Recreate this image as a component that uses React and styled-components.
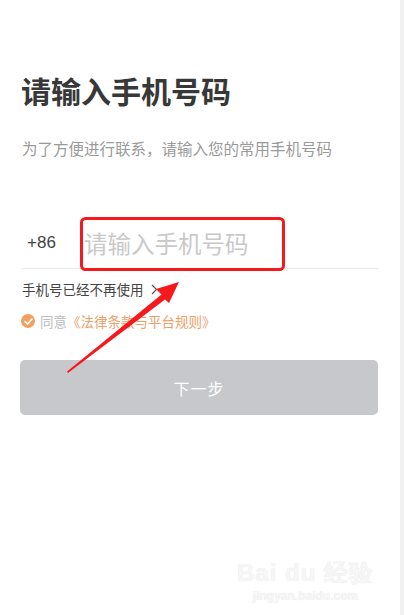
import React from 'react';
import styled, { createGlobalStyle } from 'styled-components';

const GlobalStyle = createGlobalStyle`
  html, body {
    margin: 0;
    padding: 0;
    background: #ffffff;
  }
  body {
    font-family: "Noto Sans CJK SC", "Noto Sans", sans-serif;
  }
`;

const Page = styled.div`
  position: relative;
  width: 404px;
  height: 615px;
  display: flex;
  overflow: hidden;
`;

const Main = styled.main`
  width: 400px;
  box-sizing: border-box;
  padding: 69px 22px 0 20px;
  display: flex;
  flex-direction: column;
  position: relative;
`;

const SideStrip = styled.div`
  width: 4px;
  background: #f1f1f1;
`;

const Title = styled.h1`
  margin: 0 0 0 1px;
  font-size: 30px;
  line-height: 42px;
  font-weight: 700;
  color: #383838;
`;

const Subtitle = styled.p`
  margin: 26px 0 0 2px;
  font-size: 15.5px;
  line-height: 22px;
  color: #9a9a9a;
`;

const PhoneRow = styled.div`
  margin: 59px 0 0 2px;
  height: 50px;
  display: flex;
  align-items: center;
  border-bottom: 1px solid #e9e9e9;
`;

const Prefix = styled.span`
  width: 57px;
  padding-left: 5px;
  font-family: "Liberation Sans", Arial, sans-serif;
  font-size: 17px;
  color: #444444;
`;

const PhoneInput = styled.input`
  flex: 1;
  border: none;
  outline: none;
  padding: 0;
  background: transparent;
  font-family: "Noto Sans CJK SC", sans-serif;
  font-size: 23.5px;
  color: #333;

  &::placeholder {
    color: #c9c9c9;
  }
`;

const LinkRow = styled.div`
  margin: 10px 0 0 2px;
  display: flex;
  align-items: center;
  gap: 7px;
  font-size: 13.5px;
  line-height: 20px;
  color: #444444;
`;

const AgreeRow = styled.div`
  margin: 12px 0 0 1px;
  display: flex;
  align-items: center;
  font-size: 13.5px;
  line-height: 20px;
`;

const Check = styled.span`
  width: 14px;
  height: 14px;
  border-radius: 50%;
  background: #f0a060;
  display: inline-flex;
  align-items: center;
  justify-content: center;
  margin-right: 5px;
`;

const Gray = styled.span`
  color: #bdbdbd;
`;

const Orange = styled.span`
  color: #eda067;
`;

const NextButton = styled.button`
  margin-top: 29px;
  height: 55px;
  width: 100%;
  border: none;
  border-radius: 5px;
  background: #c6c8cb;
  color: #ffffff;
  font-family: "Noto Sans CJK SC", sans-serif;
  font-size: 16px;
  letter-spacing: 1px;
`;

const Watermark = styled.div`
  position: absolute;
  right: 26px;
  bottom: 12px;
  display: flex;
  flex-direction: column;
  align-items: center;
  color: #f6f6f6;
  text-shadow: 0 0 1px #e2e2e2;
  font-family: "Liberation Sans", Arial, sans-serif;
`;

const MarkTop = styled.div`
  font-size: 24px;
  font-weight: 700;
  letter-spacing: 1px;
`;

const MarkUrl = styled.div`
  font-size: 12px;
  font-weight: 700;
`;

const Annotation = styled.svg`
  position: absolute;
  left: 0;
  top: 0;
  pointer-events: none;
`;

export default function App() {
  return (
    <>
      <GlobalStyle />
      <Page>
        <Main>
          <Title>请输入手机号码</Title>
          <Subtitle>为了方便进行联系，请输入您的常用手机号码</Subtitle>
          <PhoneRow>
            <Prefix>+86</Prefix>
            <PhoneInput placeholder="请输入手机号码" />
          </PhoneRow>
          <LinkRow>
            手机号已经不再使用
            <svg width="7" height="11" viewBox="0 0 7 11">
              <path d="M1 1 L5.5 5.5 L1 10" fill="none" stroke="#555" strokeWidth="1.2" />
            </svg>
          </LinkRow>
          <AgreeRow>
            <Check>
              <svg width="9" height="7" viewBox="0 0 9 7">
                <path d="M1 3.5 L3.5 6 L8 1" fill="none" stroke="#fff" strokeWidth="1.6" strokeLinecap="round" strokeLinejoin="round" />
              </svg>
            </Check>
            <Gray>同意</Gray>
            <Orange>《法律条款与平台规则》</Orange>
          </AgreeRow>
          <NextButton>下一步</NextButton>
          <Watermark>
            <MarkTop>Bai du 经验</MarkTop>
            <MarkUrl>jingyan.baidu.com</MarkUrl>
          </Watermark>
        </Main>
        <SideStrip />
        <Annotation width="404" height="615" viewBox="0 0 404 615">
          <rect x="81.5" y="218.5" width="202" height="51" rx="4" fill="none" stroke="#f5191e" strokeWidth="3" />
          <polygon points="179,282 169,303 165,299.5 68,373 67,371.5 161.5,294.5 156,289" fill="#f5191e" />
        </Annotation>
      </Page>
    </>
  );
}
